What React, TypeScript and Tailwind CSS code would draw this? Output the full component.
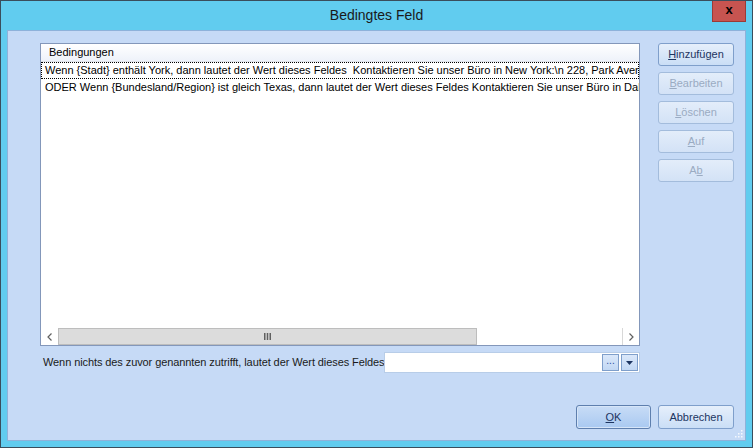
const font = { fontFamily: '"Liberation Sans", Arial, sans-serif' };

function SideButton({ label, mnemonic, disabled }: { label: string; mnemonic: number; disabled?: boolean }) {
  return (
    <button
      className={`h-[23px] w-[76px] rounded-[3px] border text-[11px] ${
        disabled
          ? "border-[#a3bcdc] bg-gradient-to-b from-[#e3edfa] to-[#d3e2f6] text-[#9aabc2]"
          : "border-[#7f9fcb] bg-gradient-to-b from-[#e6effb] to-[#cadef6] text-[#1d3561]"
      }`}
    >
      {label.slice(0, mnemonic)}
      <span className="underline">{label[mnemonic]}</span>
      {label.slice(mnemonic + 1)}
    </button>
  );
}

function Grip() {
  const dots = [
    [8, 0],
    [8, 3],
    [5, 3],
    [8, 6],
    [5, 6],
    [2, 6],
  ];
  return (
    <svg width="10" height="8" className="absolute bottom-[2px] right-[2px]">
      {dots.map(([x, y], i) => (
        <rect key={i} x={x} y={y} width="1.5" height="1.5" fill="#f4f8fd" />
      ))}
    </svg>
  );
}

export default function App() {
  return (
    <div className="relative h-[448px] w-[753px] overflow-hidden border border-[#3a4d5c] bg-[#61ccef]" style={font}>
      <div className="flex h-[29px] items-center justify-center text-[14px] text-[#1a1a1a]">Bedingtes Feld</div>
      <button className="absolute right-[6px] top-0 flex h-[21px] w-[34px] items-center justify-center border border-[#9c3a36] border-t-0 bg-[#c75450] pb-[2px] text-[13px] font-bold text-black">
        x
      </button>

      <div className="relative mx-[6px] h-[411px] border border-[#8eb2da] bg-[#c6daf6] pl-[32px] pt-[12px]">
        <div className="flex gap-[18px]">
          <div className="flex flex-col">
            <div className="flex h-[303px] w-[600px] flex-col border border-[#8397ba] bg-white">
              <div className="flex h-[18px] items-center border-b border-[#dfe3ea] bg-gradient-to-b from-white to-[#eef2fa] pl-[8px] text-[11px] text-black">
                Bedingungen
              </div>
              <div className="flex-1 overflow-hidden text-[11px] text-black">
                <div className="flex h-[17px] items-center whitespace-pre border border-dotted border-black pl-[3px]">
                  Wenn {"{Stadt}"} enthält York, dann lautet der Wert dieses Feldes  Kontaktieren Sie unser Büro in New York:\n 228, Park Avenue
                </div>
                <div className="flex h-[17px] items-center whitespace-pre pl-[4px]">
                  ODER Wenn {"{Bundesland/Region}"} ist gleich Texas, dann lautet der Wert dieses Feldes Kontaktieren Sie unser Büro in Dallas
                </div>
              </div>
              <div className="flex h-[17px] bg-white">
                <div className="flex w-[17px] items-center justify-center">
                  <svg width="5" height="8">
                    <path d="M4.5 0.5 L1 4 L4.5 7.5" stroke="#606060" strokeWidth="1.2" fill="none" />
                  </svg>
                </div>
                <div className="flex w-[419px] items-center justify-center border border-[#bdbdbd] bg-[#dcdcdc]">
                  <svg width="7" height="7">
                    <rect x="0" y="0" width="1.5" height="7" fill="#606060" />
                    <rect x="2.75" y="0" width="1.5" height="7" fill="#606060" />
                    <rect x="5.5" y="0" width="1.5" height="7" fill="#606060" />
                  </svg>
                </div>
                <div className="flex-1" />
                <div className="flex w-[17px] items-center justify-center border-l border-[#d8d8d8]">
                  <svg width="5" height="8">
                    <path d="M0.5 0.5 L4 4 L0.5 7.5" stroke="#606060" strokeWidth="1.2" fill="none" />
                  </svg>
                </div>
              </div>
            </div>

            <div className="mt-[6px] flex items-center">
              <span className="ml-[3px] w-[341px] whitespace-nowrap text-[11px] tracking-[-0.09px] text-[#1a1a1a]">
                Wenn nichts des zuvor genannten zutrifft, lautet der Wert dieses Feldes
              </span>
              <div className="flex h-[21px] w-[256px] items-center justify-end gap-[2px] border border-[#b8cde8] bg-white pr-[1px]">
                <button className="flex h-[17px] w-[17px] items-center justify-center border border-[#7f9fcb] bg-gradient-to-b from-[#dbe8fa] to-[#c2d8f4] pb-[3px] text-[10px] leading-none text-[#2a4fa0]">
                  ...
                </button>
                <button className="flex h-[17px] w-[17px] items-center justify-center border border-[#7f9fcb] bg-gradient-to-b from-[#dbe8fa] to-[#c2d8f4]">
                  <svg width="7" height="4">
                    <path d="M0 0 L7 0 L3.5 4 Z" fill="#1d3561" />
                  </svg>
                </button>
              </div>
            </div>
          </div>

          <div className="flex flex-col gap-[6px]">
            <SideButton label="Hinzufügen" mnemonic={0} />
            <SideButton label="Bearbeiten" mnemonic={0} disabled />
            <SideButton label="Löschen" mnemonic={0} disabled />
            <SideButton label="Auf" mnemonic={0} disabled />
            <SideButton label="Ab" mnemonic={1} disabled />
          </div>
        </div>

        <div className="absolute bottom-[11px] right-[11px] flex gap-[7px]">
          <button className="h-[24px] w-[75px] rounded-[3px] border border-[#5e7fae] bg-gradient-to-b from-[#c8dcf6] to-[#a9c9f1] text-[11px] text-[#1d3561] shadow-[inset_0_0_0_1px_#d6e5f8]">
            <span className="underline">O</span>K
          </button>
          <button className="h-[24px] w-[76px] rounded-[3px] border border-[#7f9fcb] bg-gradient-to-b from-[#e6effb] to-[#cadef6] text-[11px] text-[#1d3561]">
            Abbrechen
          </button>
        </div>
        <Grip />
      </div>
    </div>
  );
}
